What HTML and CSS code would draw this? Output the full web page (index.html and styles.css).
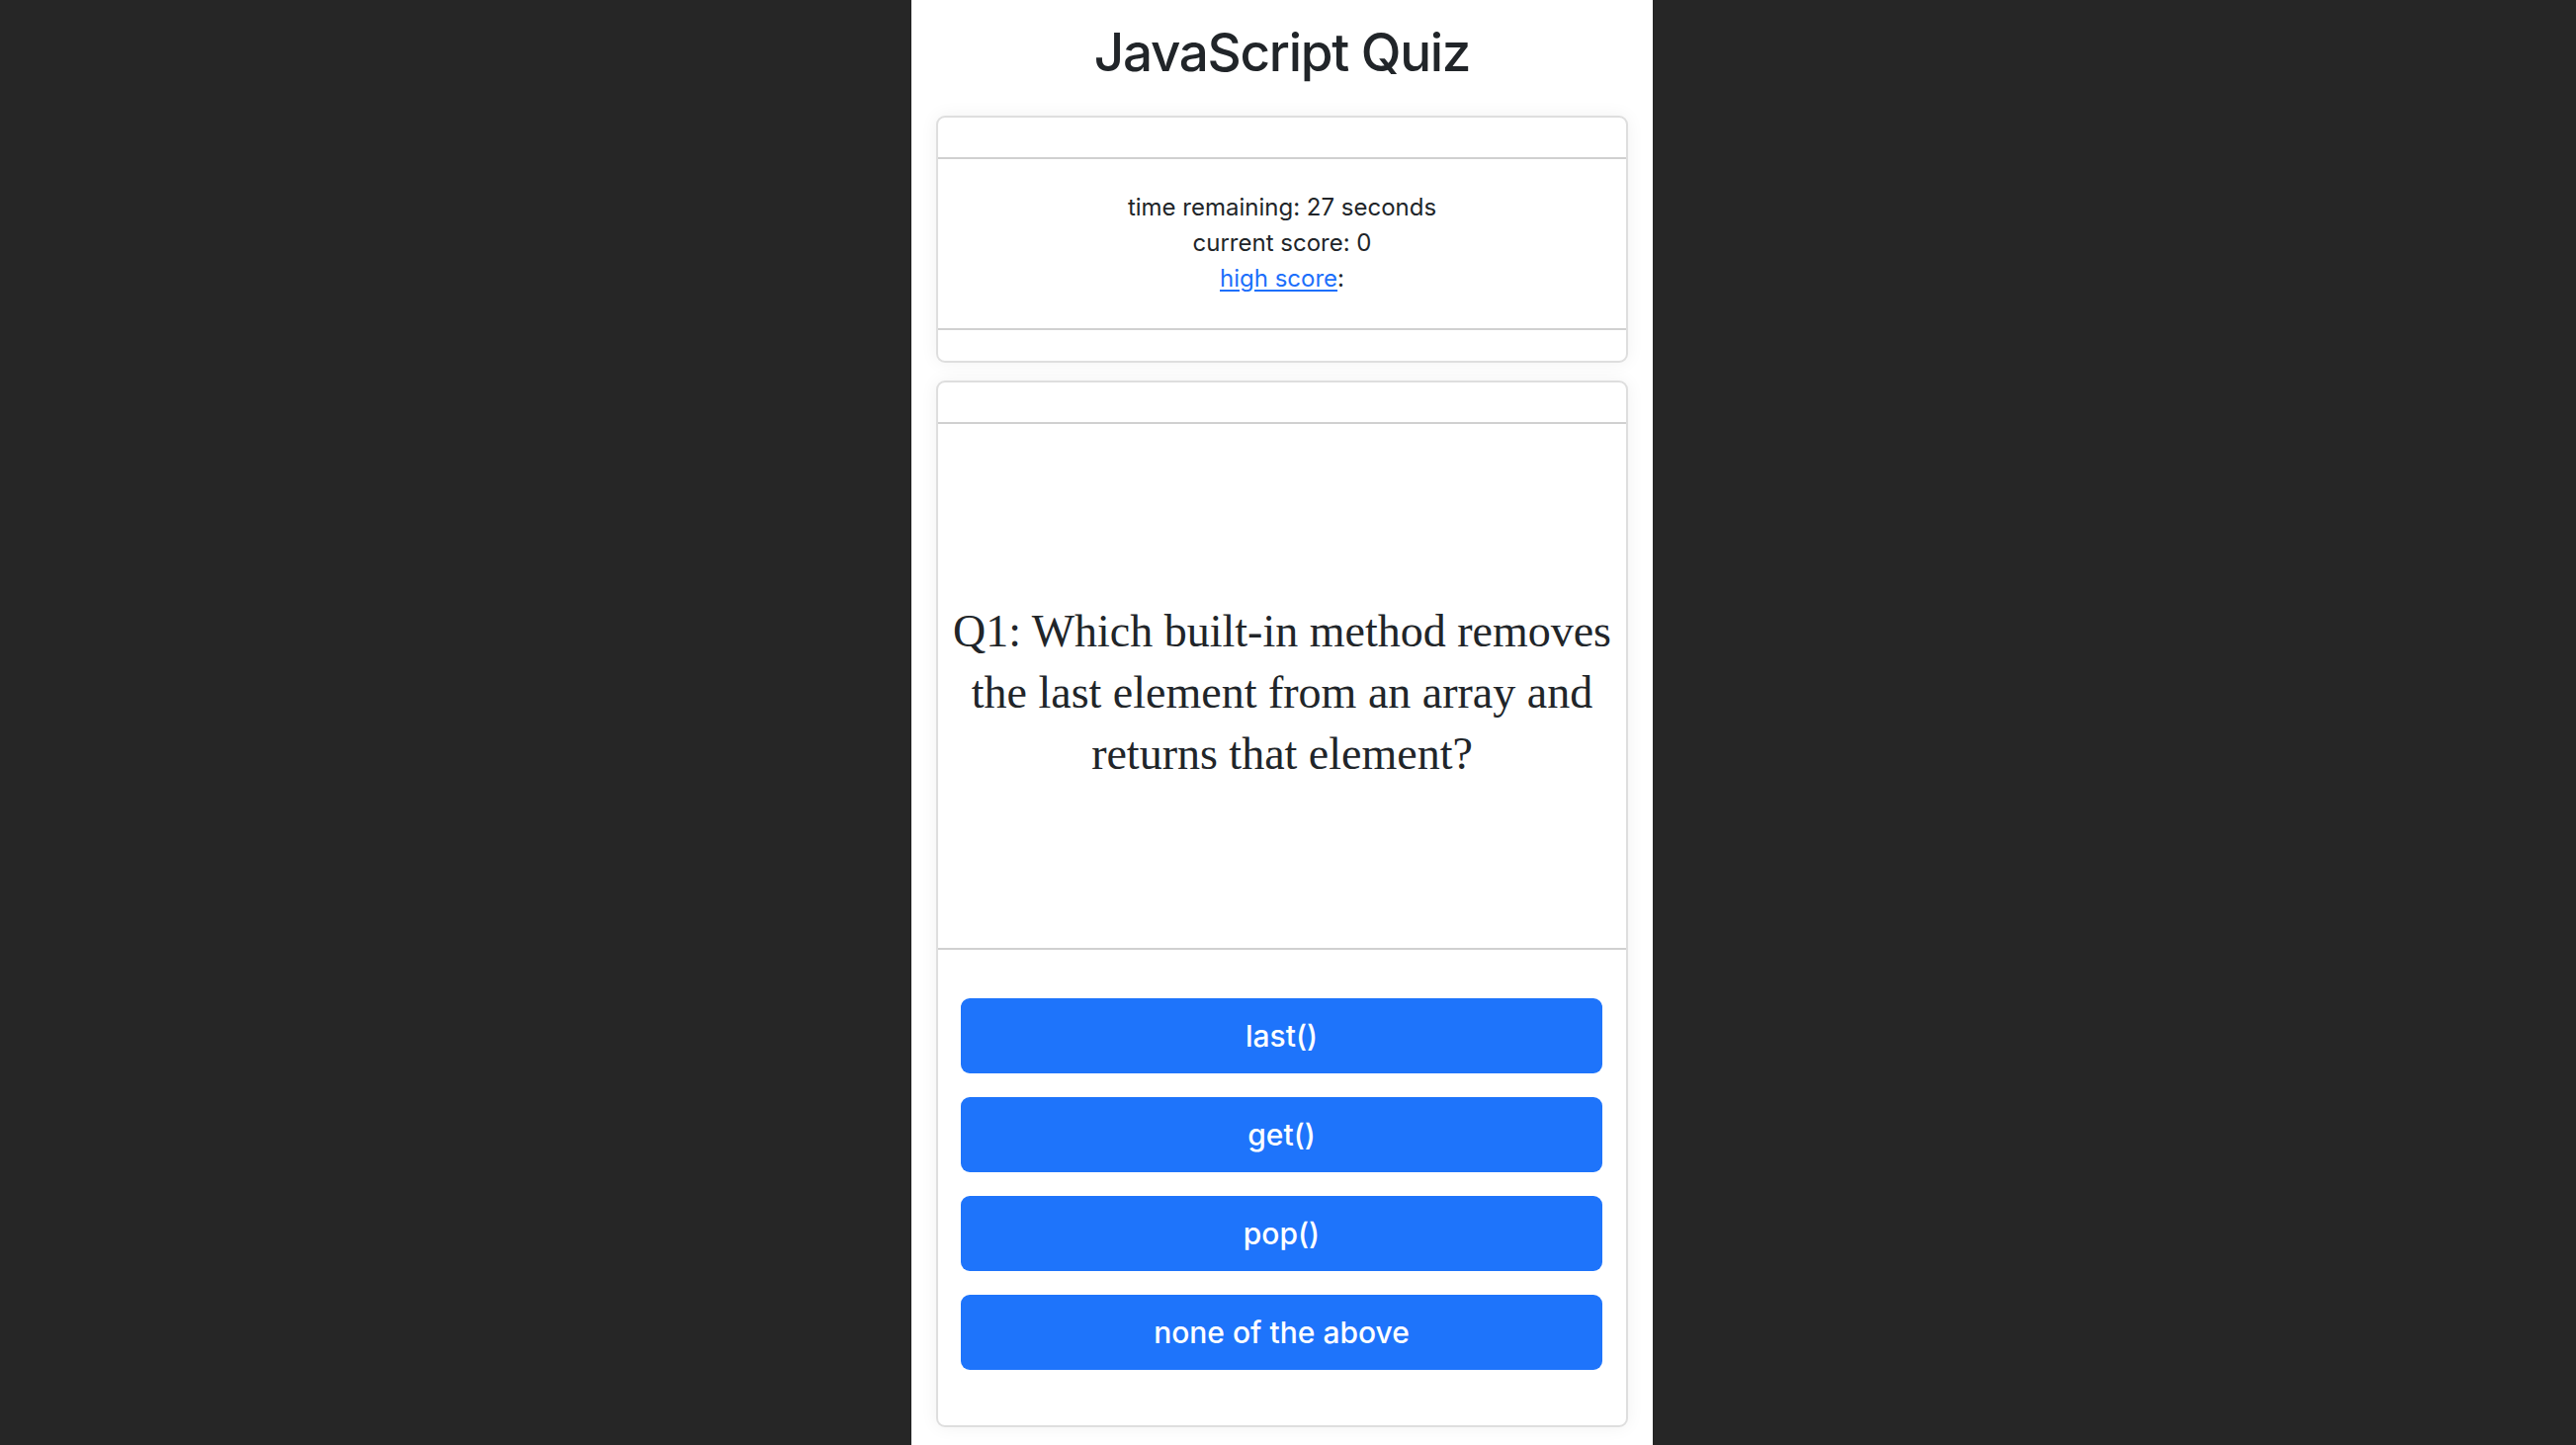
FILE: index.html
```html
<!DOCTYPE html>
<html lang="en">
<head>
<meta charset="utf-8">
<title>JavaScript Quiz</title>
<link rel="stylesheet" href="styles.css">
</head>
<body>
<main class="page">
  <h1 class="title">JavaScript Quiz</h1>

  <section class="card">
    <div class="card-header"></div>
    <div class="card-body stats">
      <div>time remaining: 27 seconds</div>
      <div>current score: 0</div>
      <div><a href="#" class="link">high score</a>:</div>
    </div>
    <div class="card-footer"></div>
  </section>

  <section class="card quiz">
    <div class="card-header"></div>
    <div class="card-body question-body">
      <h2 class="question">Q1: Which built-in method removes the last element from an array and returns that element?</h2>
    </div>
    <div class="answers">
      <button class="btn">last()</button>
      <button class="btn">get()</button>
      <button class="btn">pop()</button>
      <button class="btn">none of the above</button>
    </div>
  </section>
</main>
</body>
</html>
```

FILE: styles.css
```css
html, body {
  margin: 0;
  height: 100%;
}

body {
  background: #262626;
  display: flex;
  justify-content: center;
  padding-right: 12px;
  font-family: Inter, "Liberation Sans", sans-serif;
  color: #212529;
}

.page {
  width: 750px;
  min-height: 100%;
  box-sizing: border-box;
  background: #ffffff;
  padding: 0 25px;
  display: flex;
  flex-direction: column;
}

.title {
  margin: 21px 0 31px;
  font-size: 53px;
  line-height: 65px;
  font-weight: 500;
  letter-spacing: -1.3px;
  text-align: center;
  color: #212529;
}

.card {
  border: 2px solid #dedede;
  border-radius: 9px;
  box-shadow: 0 0 18px rgba(0, 0, 0, 0.06);
  background: #fff;
}

.card + .card {
  margin-top: 18px;
}

.card-header {
  height: 40px;
  border-bottom: 2px solid #d0d0d0;
}

.card-footer {
  height: 31px;
  border-top: 2px solid #d0d0d0;
}

.stats {
  padding: 31px 24px 32px;
  font-size: 24px;
  line-height: 36px;
  text-align: center;
}

.link {
  color: #1d6ffb;
  text-decoration: underline;
  text-underline-offset: 3px;
}

.question-body {
  height: 532px;
  box-sizing: border-box;
  padding: 14px 12px 0;
  display: flex;
  align-items: center;
  justify-content: center;
  border-bottom: 2px solid #d0d0d0;
}

.question {
  margin: 0;
  font-family: "Liberation Serif", "Times New Roman", serif;
  font-weight: 400;
  font-size: 46px;
  line-height: 62px;
  text-align: center;
  color: #212529;
}

.answers {
  display: flex;
  flex-direction: column;
  gap: 24px;
  padding: 49px 24px 56px 23px;
}

.btn {
  height: 76px;
  border: none;
  border-radius: 9px;
  background: #1e74fb;
  color: #ffffff;
  font-family: Inter, "Liberation Sans", sans-serif;
  font-size: 30px;
  font-weight: 500;
  cursor: pointer;
}
```
